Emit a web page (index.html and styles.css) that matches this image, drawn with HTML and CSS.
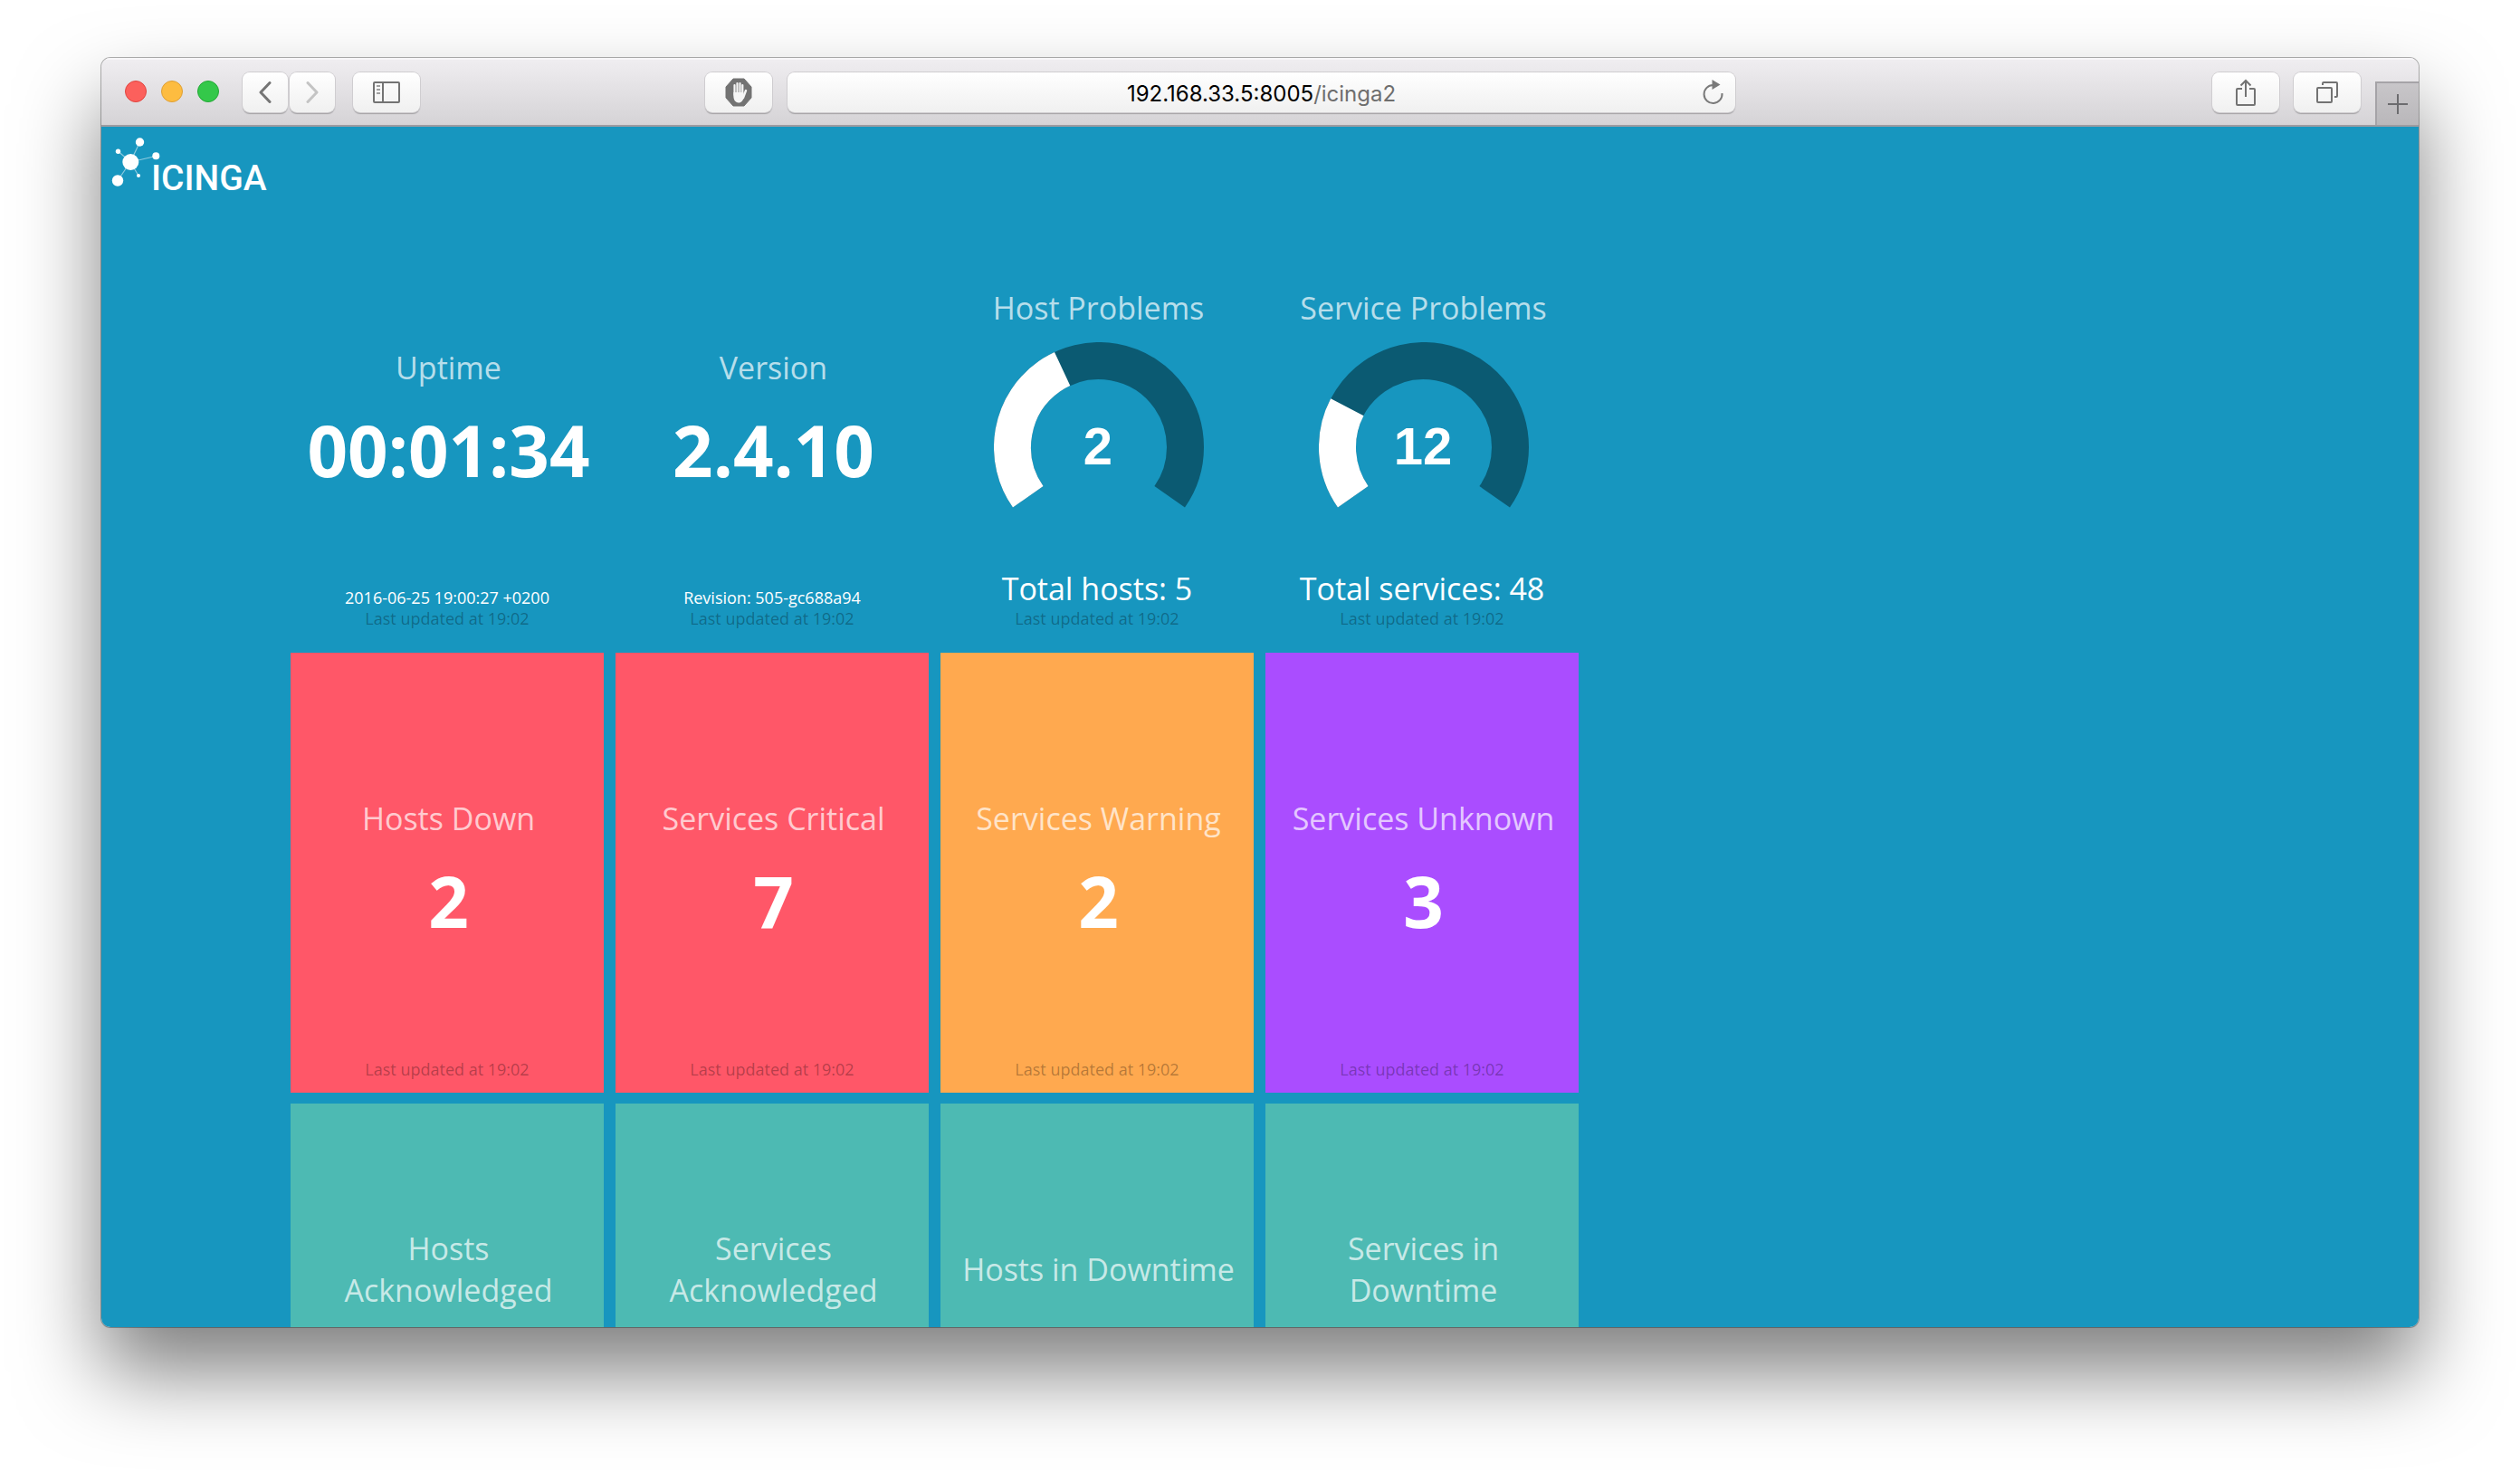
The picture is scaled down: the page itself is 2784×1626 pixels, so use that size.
FILE: index.html
```html
<!DOCTYPE html>
<html lang="en">
<head>
  <meta charset="utf-8">
  <title>Icinga 2 Dashboard</title>
  <link rel="stylesheet" href="styles.css">
</head>
<body>
  <div class="window">
    <header class="toolbar">
      <div class="toolbar-left">
        <div class="lights">
          <button class="light light-close" aria-label="Close"></button>
          <button class="light light-minimize" aria-label="Minimize"></button>
          <button class="light light-zoom" aria-label="Zoom"></button>
        </div>
        <div class="history">
          <button class="tool tool-narrow" aria-label="Back">
            <svg width="14" height="24" viewBox="0 0 14 24"><path d="M12 1.500L2 12l10 10.500" fill="none" stroke="#757575" stroke-width="3" stroke-linecap="round" stroke-linejoin="round"/></svg>
          </button>
          <button class="tool tool-narrow" aria-label="Forward">
            <svg width="14" height="24" viewBox="0 0 14 24"><path d="M2 1.500L12 12 2 22.500" fill="none" stroke="#c4c4c4" stroke-width="3" stroke-linecap="round" stroke-linejoin="round"/></svg>
          </button>
        </div>
        <button class="tool" aria-label="Show sidebar">
          <svg width="30" height="24" viewBox="0 0 30 24"><rect x="1" y="1" width="28" height="22" rx="1" fill="none" stroke="#737373" stroke-width="2"/><path d="M11 1v22" stroke="#737373" stroke-width="2"/><path d="M4 5h4M4 9h4M4 13h4" stroke="#a0a0a0" stroke-width="2"/></svg>
        </button>
      </div>
      <div class="toolbar-center">
        <button class="tool" aria-label="Ad blocker">
          <svg width="30" height="32" viewBox="0 0 30 32"><path d="M9 1h12l8 9v12l-8 9H9l-8-9V10z" fill="#737373" stroke="#737373"/><g fill="none" stroke="#f6f6f6" stroke-linecap="round"><path d="M10.500 8v11M13.500 6v12M16.500 6v12M19.300 8v12" stroke-width="2.200"/><path d="M23 14l-3 8" stroke-width="2.400"/></g><path d="M9.400 16h10.800l.8 5c-1 4-3 6.500-6 6.500-4 0-5.600-4-5.600-7z" fill="#f6f6f6"/></svg>
        </button>
        <div class="address">
          <button class="address-text"><span class="address-host">192.168.33.5:8005</span><span class="address-path">/icinga2</span></button>
          <button class="reload" aria-label="Reload">
            <svg width="24" height="28" viewBox="0 0 24 28"><path d="M11.500 6A10 10 0 1 0 21.500 15" fill="none" stroke="#7a7a7a" stroke-width="2"/><path d="M10.500 0l9 5.500-9 5.500z" fill="#7a7a7a"/></svg>
          </button>
        </div>
      </div>
      <div class="toolbar-right">
        <button class="tool" aria-label="Share">
          <svg width="24" height="32" viewBox="0 0 24 32"><path d="M8 12H3a1 1 0 0 0-1 1v16a1 1 0 0 0 1 1h18a1 1 0 0 0 1-1V13a1 1 0 0 0-1-1h-5M12 21V3M6.500 8.500L12 3l5.500 5.500" fill="none" stroke="#737373" stroke-width="2"/></svg>
        </button>
        <button class="tool" aria-label="Show all tabs">
          <svg width="24" height="24" viewBox="0 0 24 24"><rect x="1" y="7" width="16" height="16" rx="1" fill="none" stroke="#737373" stroke-width="2"/><path d="M7 4V2a1 1 0 0 1 1-1h14a1 1 0 0 1 1 1v14a1 1 0 0 1-1 1h-2" fill="none" stroke="#737373" stroke-width="2"/></svg>
        </button>
        <button class="new-tab" aria-label="New tab">
          <svg width="22" height="22" viewBox="0 0 22 22"><path d="M11 0v22M0 11h22" stroke="#6c6c6f" stroke-width="2"/></svg>
        </button>
      </div>
    </header>

    <main class="page">
      <div class="brand">
        <svg class="logo" viewBox="0 0 170 59" role="img" aria-label="Icinga">
          <g stroke="#fff" stroke-opacity=".5" stroke-width="1.200">
            <path d="M20 27L30.500 5M20 27L6.500 15M20 27l28-6.500M20 27L6 47.500M20 27l9 15"/>
          </g>
          <g fill="#fff">
            <circle cx="20.300" cy="27" r="9"/>
            <circle cx="30.500" cy="5" r="4.700"/>
            <circle cx="6.500" cy="15.300" r="2.700"/>
            <circle cx="48.300" cy="20.300" r="4"/>
            <circle cx="6" cy="47.500" r="6.200"/>
            <circle cx="29" cy="42" r="2"/>
            <text class="wordmark" x="43" y="58">ICINGA</text>
          </g>
        </svg>
      </div>

      <div class="tiles">
        <section class="tile">
          <div class="tile-body"><h1 class="tile-title">Uptime</h1><p class="tile-value">00:01:34</p></div>
          <div class="tile-footer"><p class="tile-note">2016-06-25 19:00:27 +0200</p><p class="tile-updated">Last updated at 19:02</p></div>
        </section>
        <section class="tile">
          <div class="tile-body"><h1 class="tile-title">Version</h1><p class="tile-value">2.4.10</p></div>
          <div class="tile-footer"><p class="tile-note">Revision: 505-gc688a94</p><p class="tile-updated">Last updated at 19:02</p></div>
        </section>
        <section class="tile">
          <div class="tile-body">
            <h1 class="tile-title">Host Problems</h1>
            <svg class="gauge" viewBox="0 0 232 238" role="img" aria-label="2 of 5">
              <circle class="gauge-track" cx="116" cy="116" r="95.500" pathLength="360" transform="rotate(145 116 116)"/>
              <circle class="gauge-fill" cx="116" cy="116" r="95.500" pathLength="360" stroke-dasharray="100 360" transform="rotate(145 116 116)"/>
              <text class="gauge-value" x="115" y="135">2</text>
            </svg>
          </div>
          <div class="tile-footer"><p class="tile-total">Total hosts: 5</p><p class="tile-updated">Last updated at 19:02</p></div>
        </section>
        <section class="tile">
          <div class="tile-body">
            <h1 class="tile-title">Service Problems</h1>
            <svg class="gauge" viewBox="0 0 232 238" role="img" aria-label="12 of 48">
              <circle class="gauge-track" cx="116" cy="116" r="95.500" pathLength="360" transform="rotate(145 116 116)"/>
              <circle class="gauge-fill" cx="116" cy="116" r="95.500" pathLength="360" stroke-dasharray="62.500 360" transform="rotate(145 116 116)"/>
              <text class="gauge-value" x="115" y="135">12</text>
            </svg>
          </div>
          <div class="tile-footer"><p class="tile-total">Total services: 48</p><p class="tile-updated">Last updated at 19:02</p></div>
        </section>

        <section class="tile tile-critical">
          <div class="tile-body"><h1 class="tile-title">Hosts Down</h1><p class="tile-value">2</p></div>
          <div class="tile-footer"><p class="tile-updated">Last updated at 19:02</p></div>
        </section>
        <section class="tile tile-critical">
          <div class="tile-body"><h1 class="tile-title">Services Critical</h1><p class="tile-value">7</p></div>
          <div class="tile-footer"><p class="tile-updated">Last updated at 19:02</p></div>
        </section>
        <section class="tile tile-warning">
          <div class="tile-body"><h1 class="tile-title">Services Warning</h1><p class="tile-value">2</p></div>
          <div class="tile-footer"><p class="tile-updated">Last updated at 19:02</p></div>
        </section>
        <section class="tile tile-unknown">
          <div class="tile-body"><h1 class="tile-title">Services Unknown</h1><p class="tile-value">3</p></div>
          <div class="tile-footer"><p class="tile-updated">Last updated at 19:02</p></div>
        </section>

        <section class="tile tile-handled">
          <div class="tile-body"><h1 class="tile-title">Hosts Acknowledged</h1><p class="tile-value">0</p></div>
        </section>
        <section class="tile tile-handled">
          <div class="tile-body"><h1 class="tile-title">Services Acknowledged</h1><p class="tile-value">0</p></div>
        </section>
        <section class="tile tile-handled">
          <div class="tile-body"><h1 class="tile-title">Hosts in Downtime</h1><p class="tile-value">0</p></div>
        </section>
        <section class="tile tile-handled">
          <div class="tile-body"><h1 class="tile-title">Services in Downtime</h1><p class="tile-value">0</p></div>
        </section>
      </div>
    </main>
  </div>
</body>
</html>
```
FILE: styles.css
```css
* {
  box-sizing: border-box;
}

body {
  margin: 0;
  height: 100vh;
  padding: 64px 112px 160px;
  display: flex;
  background: #fff;
  font-family: "Open Sans", sans-serif;
}

h1,
p {
  margin: 0;
}

button {
  padding: 0;
  border: 0;
  background: none;
  font: inherit;
}

svg {
  display: block;
}

/* Browser window */
.window {
  flex: 1;
  min-width: 0;
  display: flex;
  flex-direction: column;
  overflow: hidden;
  border-radius: 10px;
  box-shadow: 0 0 0 1px rgba(0, 0, 0, .3), 0 50px 90px rgba(0, 0, 0, .5);
}

.toolbar {
  flex: none;
  height: 76px;
  display: grid;
  grid-template-columns: 667px 1fr 755px;
  align-items: center;
  border-bottom: 2px solid #9d9ba0;
  background: linear-gradient(#f0eef1, #d5d3d6);
  box-shadow: inset 0 2px 0 #f7f6f8;
}

.toolbar-left,
.toolbar-center,
.toolbar-right,
.lights,
.history {
  display: flex;
  align-items: center;
}

.toolbar-left {
  padding-left: 26px;
  gap: 20px;
}

.lights {
  gap: 16px;
  margin-right: 6px;
}

.light {
  width: 24px;
  height: 24px;
  border: 1px solid;
  border-radius: 50%;
}

.light-close {
  background: #fc605c;
  border-color: #e0443f;
}

.light-minimize {
  background: #fdbc40;
  border-color: #de9f34;
}

.light-zoom {
  background: #34c84a;
  border-color: #24a836;
}

.history {
  gap: 2px;
}

.tool,
.address {
  height: 44px;
  margin-top: 2px;
  border-radius: 8px;
  background: linear-gradient(#fff, #f0f0f0);
  box-shadow: 0 0 0 1px #cfcdd0, 0 2px 1px #a3a1a4;
}

.tool {
  width: 74px;
  flex: none;
  display: flex;
  align-items: center;
  justify-content: center;
}

.tool-narrow {
  width: 50px;
}

.toolbar-center {
  gap: 17px;
}

.toolbar-center .tool {
  width: 74px;
}

.address {
  flex: 1;
  display: flex;
  align-items: center;
  padding-left: 48px;
}

.address-text {
  flex: 1;
  padding-top: 4px;
  color: #000;
  font: 24px/32px Inter, sans-serif;
}

.address-path {
  color: #6e6e6e;
}

.reload {
  width: 48px;
  display: flex;
  justify-content: center;
}

.toolbar-right {
  align-self: stretch;
  justify-content: flex-end;
  gap: 16px;
}

.new-tab {
  width: 48px;
  height: 48px;
  align-self: flex-end;
  display: flex;
  align-items: center;
  justify-content: center;
  border-top: 2px solid #a5a3a7;
  border-left: 2px solid #a5a3a7;
  background: linear-gradient(#c8c6c9, #b9b7ba);
}

/* Dashboard */
.page {
  flex: 1;
  min-height: 0;
  overflow: auto;
  scrollbar-width: none;
  background: #1796bf;
  color: #fff;
}

.brand {
  padding: 12px;
}

.logo {
  width: 170px;
  height: 59px;
  overflow: visible;
}

.wordmark {
  font: 500 39px Roboto, sans-serif;
}

.tiles {
  display: grid;
  grid-template-columns: repeat(4, 346px);
  grid-auto-rows: 486px;
  gap: 12px 13px;
  margin-left: 209px;
}

/* Body and footer share one cell so the footer never shifts the centred body. */
.tile {
  display: grid;
  grid-template-areas: "cell";
  text-align: center;
}

.tile-body {
  grid-area: cell;
  align-self: center;
  display: flex;
  flex-direction: column;
  align-items: center;
  gap: 15px;
  padding: 0 13px 0 16px;
}

.tile-footer {
  grid-area: cell;
  align-self: end;
  padding-bottom: 14px;
}

.tile-title {
  font-size: 34px;
  font-weight: 400;
  line-height: 46px;
  color: rgba(255, 255, 255, .7);
}

.tile-value {
  font-size: 78px;
  font-weight: 700;
  line-height: 106px;
}

.tile-note,
.tile-updated {
  font-size: 18px;
  line-height: 23px;
}

.tile-total {
  font-size: 34px;
  line-height: 44px;
}

.tile-updated {
  color: rgba(0, 0, 0, .3);
}

.tile-critical {
  background: #ff5768;
}

.tile-warning {
  background: #ffa94f;
}

.tile-unknown {
  background: #aa4dff;
}

.tile-handled {
  background: #4dbab3;
}

.gauge {
  width: 232px;
  height: 238px;
}

.gauge-track,
.gauge-fill {
  fill: none;
  stroke-width: 41px;
}

.gauge-track {
  stroke: #0b5a72;
  stroke-dasharray: 250 360;
}

.gauge-fill {
  stroke: #fff;
}

.gauge-value {
  fill: #fff;
  font: 700 58px "Liberation Sans", Arial, sans-serif;
  text-anchor: middle;
}
```
